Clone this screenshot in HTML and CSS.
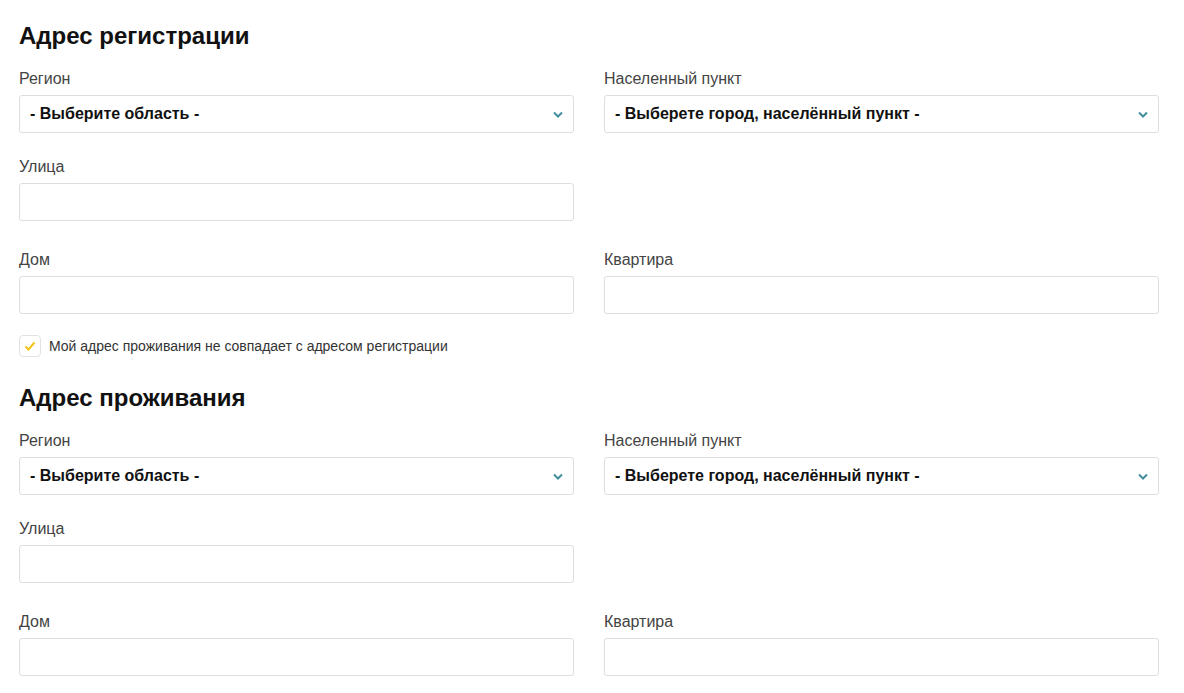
FILE: index.html
```html
<!DOCTYPE html>
<html lang="ru">
<head>
<meta charset="utf-8">
<title>Адрес</title>
<link rel="stylesheet" href="styles.css">
</head>
<body>
<div class="page">
  <h2 class="title">Адрес регистрации</h2>
  <div class="row row-first">
    <div class="field">
      <label class="label">Регион</label>
      <div class="select"><span>- Выберите область -</span><svg class="chev" width="10" height="7" viewBox="0 0 10 7"><polyline points="1,1.5 5,5.5 9,1.5" fill="none" stroke="#3f8f9c" stroke-width="2"/></svg></div>
    </div>
    <div class="field">
      <label class="label">Населенный пункт</label>
      <div class="select"><span>- Выберете город, населённый пункт -</span><svg class="chev" width="10" height="7" viewBox="0 0 10 7"><polyline points="1,1.5 5,5.5 9,1.5" fill="none" stroke="#3f8f9c" stroke-width="2"/></svg></div>
    </div>
  </div>
  <div class="row row-street">
    <div class="field">
      <label class="label">Улица</label>
      <div class="input"></div>
    </div>
  </div>
  <div class="row row-house">
    <div class="field">
      <label class="label">Дом</label>
      <div class="input"></div>
    </div>
    <div class="field">
      <label class="label">Квартира</label>
      <div class="input"></div>
    </div>
  </div>
  <div class="check">
    <span class="box"><svg width="12" height="10" viewBox="0 0 12 10"><polyline points="1.5,5.5 4.5,8.5 10.5,1.5" fill="none" stroke="#f2c417" stroke-width="2"/></svg></span>
    <span class="check-text">Мой адрес проживания не совпадает с адресом регистрации</span>
  </div>
  <h2 class="title title-second">Адрес проживания</h2>
  <div class="row row-first">
    <div class="field">
      <label class="label">Регион</label>
      <div class="select"><span>- Выберите область -</span><svg class="chev" width="10" height="7" viewBox="0 0 10 7"><polyline points="1,1.5 5,5.5 9,1.5" fill="none" stroke="#3f8f9c" stroke-width="2"/></svg></div>
    </div>
    <div class="field">
      <label class="label">Населенный пункт</label>
      <div class="select"><span>- Выберете город, населённый пункт -</span><svg class="chev" width="10" height="7" viewBox="0 0 10 7"><polyline points="1,1.5 5,5.5 9,1.5" fill="none" stroke="#3f8f9c" stroke-width="2"/></svg></div>
    </div>
  </div>
  <div class="row row-street">
    <div class="field">
      <label class="label">Улица</label>
      <div class="input"></div>
    </div>
  </div>
  <div class="row row-house">
    <div class="field">
      <label class="label">Дом</label>
      <div class="input"></div>
    </div>
    <div class="field">
      <label class="label">Квартира</label>
      <div class="input"></div>
    </div>
  </div>
</div>
</body>
</html>
```

FILE: styles.css
```css
* { box-sizing: border-box; }
html, body { margin: 0; padding: 0; background: #fff; }
body { font-family: "Liberation Sans", Arial, sans-serif; color: #111; }
.page { padding: 23px 0 0 19px; width: 1159px; }
.title {
  margin: 0;
  font-size: 24px;
  line-height: 26px;
  font-weight: bold;
  color: #111;
}
.title-second { margin-top: 29px; }
.row {
  display: grid;
  grid-template-columns: 555px 555px;
  column-gap: 30px;
}
.row-first { margin-top: 20px; }
.row-street { margin-top: 24px; }
.row-house { margin-top: 29px; }
.label {
  display: block;
  font-size: 16px;
  line-height: 18px;
  padding-top: 1px;
  color: #444;
  margin-bottom: 7px;
}
.select, .input {
  height: 38px;
  border: 1px solid #dedede;
  border-radius: 3px;
  background: #fff;
}
.select {
  display: flex;
  align-items: center;
  justify-content: space-between;
  padding: 0 10px 0 10px;
  font-size: 16px;
  font-weight: bold;
  color: #111;
}
.chev { display: block; margin-top: 1px; }
.check {
  display: flex;
  align-items: center;
  gap: 8px;
  margin-top: 22px;
  height: 20px;
}
.box {
  width: 22px;
  height: 22px;
  border: 1px solid #e2e2e2;
  border-radius: 4px;
  display: flex;
  align-items: center;
  justify-content: center;
}
.check-text {
  font-size: 14px;
  color: #333;
}
```
